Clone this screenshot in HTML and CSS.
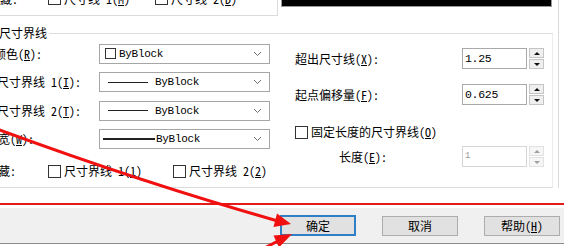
FILE: index.html
```html
<!DOCTYPE html>
<html lang="zh-CN">
<head>
<meta charset="utf-8">
<link rel="stylesheet" href="styles.css">
</head>
<body>
<div class="page">
  <div class="top-row">
    <div class="dim-group">
      <div class="top-hide">
        <span class="lbl l-tophide">隐藏:</span>
        <span class="chk c-top1"><span class="box"></span>尺寸线 1(<u>M</u>)</span>
        <span class="chk c-top2"><span class="box"></span>尺寸线 2(<u>D</u>)</span>
      </div>
    </div>
    <div class="preview"></div>
  </div>

  <div class="ext-group">
    <div class="legend">尺寸界线</div>
    <div class="cols">
      <div class="ext-left">
        <span class="lbl l-color">颜色(<u>R</u>):</span>
        <div class="combo"><span class="swatch"></span><span class="val v-color">ByBlock</span><svg class="chev" width="9" height="6" viewBox="0 0 9 6"><polyline points="1,1 4.5,4.5 8,1" fill="none" stroke="#6d6d6d" stroke-width="1"/></svg></div>

        <span class="lbl l-ext1">尺寸界线 1(<u>I</u>):</span>
        <div class="combo"><span class="ltype"></span><span class="val">ByBlock</span><svg class="chev" width="9" height="6" viewBox="0 0 9 6"><polyline points="1,1 4.5,4.5 8,1" fill="none" stroke="#6d6d6d" stroke-width="1"/></svg></div>

        <span class="lbl l-ext2">尺寸界线 2(<u>T</u>):</span>
        <div class="combo"><span class="ltype"></span><span class="val">ByBlock</span><svg class="chev" width="9" height="6" viewBox="0 0 9 6"><polyline points="1,1 4.5,4.5 8,1" fill="none" stroke="#6d6d6d" stroke-width="1"/></svg></div>

        <span class="lbl l-lw">线宽(<u>W</u>):</span>
        <div class="combo"><span class="lweight"></span><span class="val">ByBlock</span><svg class="chev" width="9" height="6" viewBox="0 0 9 6"><polyline points="1,1 4.5,4.5 8,1" fill="none" stroke="#6d6d6d" stroke-width="1"/></svg></div>

        <div class="hide-row">
          <span class="lbl l-hide">隐藏:</span>
          <span class="chk c-h1"><span class="box"></span>尺寸界线 1(<u>1</u>)</span>
          <span class="chk c-h2"><span class="box"></span>尺寸界线 2(<u>2</u>)</span>
        </div>
      </div>

      <div class="ext-right">
        <div class="spin-row r1">
          <span class="lbl">超出尺寸线(<u>X</u>):</span>
          <div class="spin">
            <div class="spin-edit">1.25</div>
            <div class="spin-btns">
              <div class="sb"><span class="tri-up"></span></div>
              <div class="sb"><span class="tri-down"></span></div>
            </div>
          </div>
        </div>
        <div class="spin-row r2">
          <span class="lbl">起点偏移量(<u>F</u>):</span>
          <div class="spin">
            <div class="spin-edit">0.625</div>
            <div class="spin-btns">
              <div class="sb"><span class="tri-up"></span></div>
              <div class="sb"><span class="tri-down"></span></div>
            </div>
          </div>
        </div>
        <div class="fixed-row">
          <span class="chk"><span class="box"></span>固定长度的尺寸界线(<u>O</u>)</span>
        </div>
        <div class="spin-row r3">
          <span class="lbl l-len">长度(<u>E</u>):</span>
          <div class="spin disabled">
            <div class="spin-edit">1</div>
            <div class="spin-btns">
              <div class="sb"><span class="tri-up"></span></div>
              <div class="sb"><span class="tri-down"></span></div>
            </div>
          </div>
        </div>
      </div>
    </div>
  </div>
</div>

<div class="red-line"></div>

<div class="btn-bar">
  <div class="btn default">确定</div>
  <div class="btn">取消</div>
  <div class="btn">帮助(<u>H</u>)</div>
</div>

<svg class="arrows" width="564" height="246" viewBox="0 0 564 246">
  <path d="M -6 128 Q 140 182 276 220.5" fill="none" stroke="#f01010" stroke-width="3"/>
  <polygon points="291,224 277,213.5 273.5,227" fill="#f01010"/>
  <path d="M 238 262 L 277 241.5" fill="none" stroke="#f01010" stroke-width="3"/>
  <polygon points="292,234 279,247.5 273.5,235.5" fill="#f01010"/>
</svg>
</body>
</html>
```
FILE: styles.css
```css
html, body {
  margin: 0;
  padding: 0;
}
body {
  width: 564px;
  height: 246px;
  overflow: hidden;
  position: relative;
  background: #ffffff;
  font-family: "Noto Sans Mono CJK SC", "Noto Sans CJK SC", sans-serif;
  font-size: 12px;
  color: #000;
}
u { text-decoration: underline; text-underline-offset: 1px; }

.page {
  width: 558px;
  height: 188px;
  border-right: 1px solid #dadada;
  box-sizing: content-box;
}

.top-row {
  display: flex;
  height: 16px;
}
.dim-group {
  width: 277px;
  height: 15px;
  border-right: 1px solid #dcdcdc;
  border-bottom: 1px solid #dcdcdc;
  overflow: hidden;
}
.top-hide {
  display: flex;
  align-items: center;
  height: 13px;
  margin-top: -8px;
}
.preview {
  margin-left: 3px;
  width: 269px;
  height: 14px;
  margin-top: -9px;
  background: #000;
  border: 1px solid #9a9a9a;
}

.lbl {
  white-space: nowrap;
  line-height: 14px;
}
.chk {
  display: flex;
  align-items: center;
  white-space: nowrap;
  line-height: 14px;
}
.box {
  width: 11px;
  height: 11px;
  border: 1px solid #333;
  background: #fff;
  margin-right: 3px;
  flex: none;
}

.l-tophide { margin-left: -12px; width: 60px; }
.c-top2 { margin-left: 25px; }

.ext-group {
  margin-top: 17px;
  width: 552px;
  height: 153px;
  border-top: 1px solid #dcdcdc;
  border-right: 1px solid #ececec;
  border-bottom: 1px solid #dcdcdc;
}
.legend {
  margin-top: -8px;
  margin-left: -1px;
  width: fit-content;
  padding-right: 2px;
  background: #fff;
  line-height: 13px;
}
.cols {
  display: flex;
  align-items: flex-start;
}

.ext-left {
  display: grid;
  grid-template-columns: 99px 171px;
  row-gap: 8.5px;
  align-items: center;
  margin-top: 4.5px;
}
.l-color { margin-left: -6px; }
.l-ext1 { margin-left: -3px; }
.l-ext2 { margin-left: -3px; }
.l-lw { margin-left: -14px; }

.combo {
  height: 18px;
  border: 1px solid #a6a6a6;
  display: flex;
  align-items: center;
  position: relative;
}
.val {
  font-family: "Liberation Mono", monospace;
  font-size: 11px;
  letter-spacing: -0.3px;
}
.swatch {
  width: 9px;
  height: 9px;
  border: 1px solid #333;
  margin-left: 5px;
  margin-right: 3px;
}
.ltype {
  width: 40px;
  height: 1px;
  background: #222;
  margin-left: 8px;
  margin-right: 7px;
}
.lweight {
  width: 52px;
  height: 1.5px;
  background: #222;
  margin-left: 3px;
  margin-right: 1px;
}
.chev {
  margin-left: auto;
  margin-right: 7px;
}

.hide-row {
  grid-column: 1 / 3;
  display: flex;
  align-items: center;
  height: 13px;
  margin-top: 7px;
}
.l-hide { margin-left: -14px; width: 62px; }
.c-h2 { margin-left: 31px; }

.ext-right {
  margin-left: 25px;
  margin-top: 9px;
  display: flex;
  flex-direction: column;
}
.spin-row {
  display: grid;
  grid-template-columns: 167px auto;
  align-items: center;
}
.r2 { margin-top: 15px; }
.fixed-row {
  margin-top: 20.5px;
  height: 13px;
  display: flex;
  align-items: center;
}
.r3 { margin-top: 7.5px; }
.l-len { margin-left: 44px; }

.spin {
  display: flex;
  gap: 2px;
  height: 21px;
}
.spin-edit {
  width: 61px;
  height: 19px;
  border: 1px solid #a9a9a9;
  padding-left: 2px;
  font-family: "Liberation Mono", monospace;
  font-size: 11.5px;
  line-height: 19px;
  letter-spacing: -0.3px;
}
.spin-btns {
  width: 15px;
  display: flex;
  flex-direction: column;
  gap: 1px;
}
.sb {
  flex: 1;
  border: 1px solid #c4c4c4;
  background: #efefef;
  display: flex;
  align-items: center;
  justify-content: center;
}
.tri-up {
  width: 0; height: 0;
  border-left: 3px solid transparent;
  border-right: 3px solid transparent;
  border-bottom: 3px solid #111;
}
.tri-down {
  width: 0; height: 0;
  border-left: 3px solid transparent;
  border-right: 3px solid transparent;
  border-top: 3px solid #111;
}
.disabled .spin-edit {
  border-color: #d6d6d6;
  color: #9a9a9a;
  font-size: 9px;
}
.disabled .sb {
  border-color: #e2e2e2;
  background: #f6f6f6;
}
.disabled .tri-up { border-bottom-color: #a0a0a0; }
.disabled .tri-down { border-top-color: #a0a0a0; }

.red-line {
  margin-top: 15px;
  height: 2px;
  background: #e41b1b;
}

.btn-bar {
  margin-top: 3px;
  height: 35px;
  background: #f0f0f0;
  border-bottom: 1px solid #8c8c8c;
  display: flex;
  align-items: center;
  justify-content: flex-end;
  gap: 26px;
  padding-right: 4px;
}
.btn {
  width: 74px;
  height: 18px;
  border: 1px solid #adadad;
  background: #e1e1e1;
  display: flex;
  align-items: center;
  justify-content: center;
  line-height: 14px;
}
.btn.default {
  border: 2px solid #2f7fc6;
  width: 72px;
  height: 17px;
}

.arrows {
  position: absolute;
  left: 0;
  top: 0;
  pointer-events: none;
}
```
